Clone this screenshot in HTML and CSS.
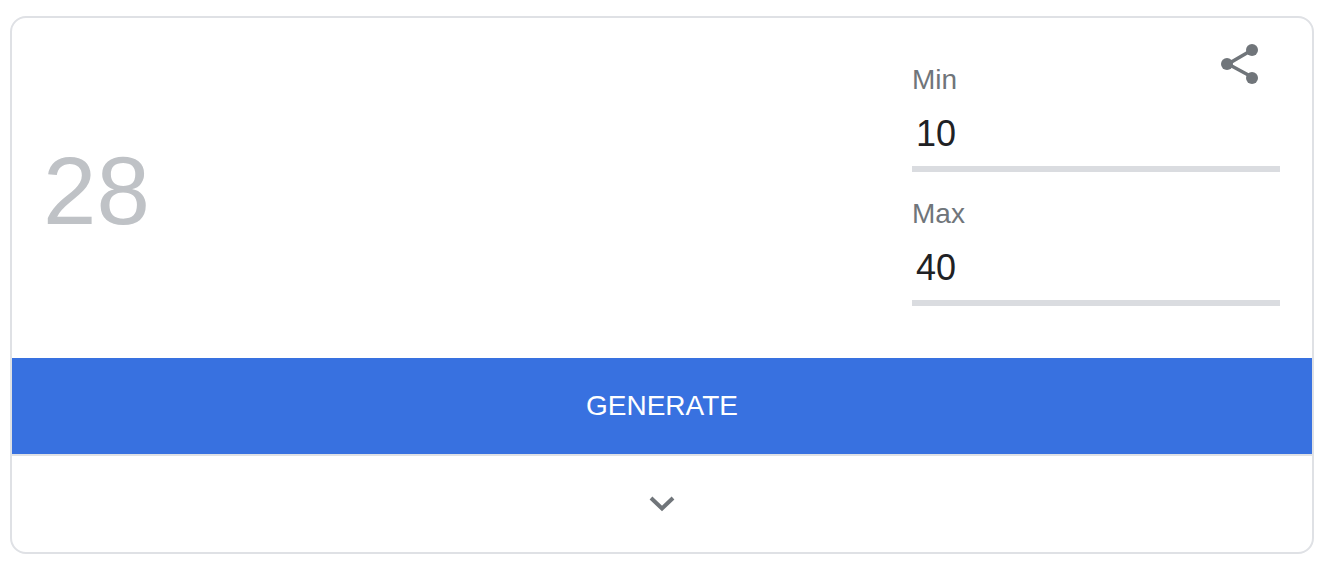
FILE: index.html
```html
<!DOCTYPE html>
<html lang="en">
<head>
<meta charset="utf-8">
<title>Random number generator</title>
<link rel="stylesheet" href="styles.css">
</head>
<body>
<main class="card">
  <section class="top">
    <div class="result">28</div>
    <div class="fields">
      <div class="field">
        <div class="label">Min</div>
        <div class="value">10</div>
        <div class="rule"></div>
      </div>
      <div class="field">
        <div class="label">Max</div>
        <div class="value">40</div>
        <div class="rule"></div>
      </div>
    </div>
    <svg class="share" viewBox="0 0 40 44" width="40" height="44" aria-hidden="true">
      <path class="share-line" d="M32 7 L8 21 L32 34"/>
      <circle class="share-dot" cx="32" cy="7" r="6"/>
      <circle class="share-dot" cx="7" cy="21" r="6"/>
      <circle class="share-dot" cx="32" cy="35" r="6"/>
    </svg>
  </section>
  <button class="generate" type="button">GENERATE</button>
  <div class="more">
    <svg class="chevron" viewBox="0 0 26 16" width="26" height="16" aria-hidden="true">
      <path d="M2 2 L13 12.5 L24 2"/>
    </svg>
  </div>
</main>
</body>
</html>
```
FILE: styles.css
```css
* { box-sizing: border-box; }
html, body { margin: 0; background: #fff; }
body {
  padding: 16px 12px 10px 10px;
  font-family: "Liberation Sans", Arial, sans-serif;
}
.card {
  height: 538px;
  border: 2px solid #dfe1e5;
  border-radius: 16px;
  overflow: hidden;
  display: flex;
  flex-direction: column;
  background: #fff;
}
.top {
  position: relative;
  height: 340px;
  display: flex;
  justify-content: space-between;
  padding: 42px 32px 0 31px;
}
.result {
  align-self: center;
  margin-top: -36px;
  font-size: 96px;
  line-height: 96px;
  color: #bfc2c6;
}
.fields { width: 368px; }
.field + .field { margin-top: 22px; }
.label {
  font-size: 28px;
  line-height: 40px;
  color: #70757a;
}
.value {
  font-size: 36px;
  line-height: 46px;
  padding: 11px 0 0 4px;
  height: 57px;
  color: #202124;
}
.rule {
  height: 6px;
  margin-top: 9px;
  background: #dadce0;
}
.share {
  position: absolute;
  top: 25px;
  right: 52px;
}
.share-line { fill: none; stroke: #70757a; stroke-width: 3.5; }
.share-dot { fill: #70757a; }
.generate {
  height: 96px;
  border: 0;
  padding: 0;
  background: #3871e0;
  color: #fff;
  font: 28px "Liberation Sans", Arial, sans-serif;
}
.more {
  flex: 1;
  border-top: 2px solid #dfe1e5;
  display: flex;
  justify-content: center;
  padding-top: 40px;
}
.chevron { fill: none; stroke: #70757a; stroke-width: 4; }
```
